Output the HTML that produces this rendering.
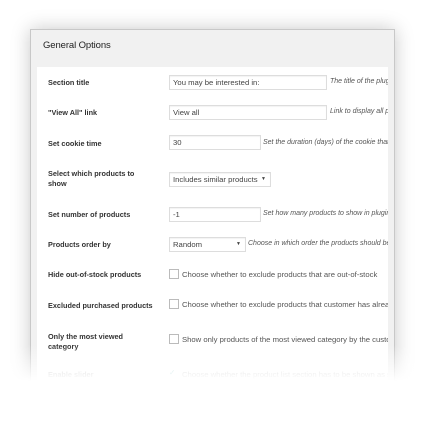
<!DOCTYPE html><html><head><style>
body{margin:0;width:422px;height:437px;background:#fff;position:relative;overflow:hidden;font-family:"Liberation Sans",sans-serif}
.panel{position:absolute;left:30px;top:29px;width:363px;height:380px;background:#f1f1f1;border:1px solid #c8c8c8;box-shadow:0 0 18px rgba(0,0,0,.22)}
.inner{position:absolute;left:37px;top:67px;width:351px;height:330px;background:#fff;overflow:hidden}
h1{position:absolute;left:43px;top:40px;margin:0;font-size:9.5px;font-weight:normal;color:#222;letter-spacing:-.1px}
.l{position:absolute;left:11px;font-size:7.3px;font-weight:bold;color:#333;line-height:9.5px;width:120px}
.i{position:absolute;left:132px;border:1px solid #ddd;box-shadow:inset 0 1px 1px rgba(0,0,0,.05);font-size:7.7px;color:#444;line-height:13px;padding-left:3px;box-sizing:border-box;height:15px;white-space:nowrap}
.d{position:absolute;font-size:7px;font-style:italic;color:#555;white-space:nowrap}
.c{position:absolute;left:132px;width:8px;height:8px;border:1px solid #bbb}
.t{position:absolute;left:145px;font-size:7.7px;color:#555;white-space:nowrap}
.ar{position:absolute;right:4px;top:0;font-size:5px}
.fade{position:absolute;left:0;top:345px;width:422px;height:45px;background:linear-gradient(rgba(255,255,255,0),#fff 80%)}
.wh{position:absolute;left:0;top:388px;width:422px;height:49px;background:#fff}
</style></head><body>
<div class="panel"></div>
<h1>General Options</h1>
<div class="inner">
<div class="l" style="top:11px">Section title</div>
<div class="i" style="top:8px;width:158px">You may be interested in:</div>
<div class="d" style="left:293px;top:11px">The title of the plugin</div>
<div class="l" style="top:41px">"View All" link</div>
<div class="i" style="top:38px;width:158px">View all</div>
<div class="d" style="left:293px;top:41px">Link to display all p</div>
<div class="l" style="top:72px">Set cookie time</div>
<div class="i" style="top:68px;width:92px">30</div>
<div class="d" style="left:226px;top:72px">Set the duration (days) of the cookie that t</div>
<div class="l" style="top:102px">Select which products to<br>show</div>
<div class="i" style="top:105px;width:102px">Includes similar products<span class="ar">▼</span></div>
<div class="l" style="top:143px">Set number of products</div>
<div class="i" style="top:140px;width:92px">-1</div>
<div class="d" style="left:226px;top:143px">Set how many products to show in plugin</div>
<div class="l" style="top:173px">Products order by</div>
<div class="i" style="top:170px;width:77px">Random<span class="ar">▼</span></div>
<div class="d" style="left:211px;top:173px">Choose in which order the products should be s</div>
<div class="l" style="top:203px">Hide out-of-stock products</div>
<div class="c" style="top:202px"></div><div class="t" style="top:203px">Choose whether to exclude products that are out-of-stock</div>
<div class="l" style="top:234px">Excluded purchased products</div>
<div class="c" style="top:232px"></div><div class="t" style="top:233px">Choose whether to exclude products that customer has alrea</div>
<div class="l" style="top:265px">Only the most viewed<br>category</div>
<div class="c" style="top:267px"></div><div class="t" style="top:268px">Show only products of the most viewed category by the custo</div>
<div class="l" style="top:303px;color:#bbb">Enable slider</div>
<div class="t" style="left:132px;top:301px;color:#9cc">✓</div><div class="t" style="top:303px;color:#bbb">Choose whether the product list section has to be shown as s</div>
</div>
<div class="fade"></div><div class="wh"></div>
</body></html>
